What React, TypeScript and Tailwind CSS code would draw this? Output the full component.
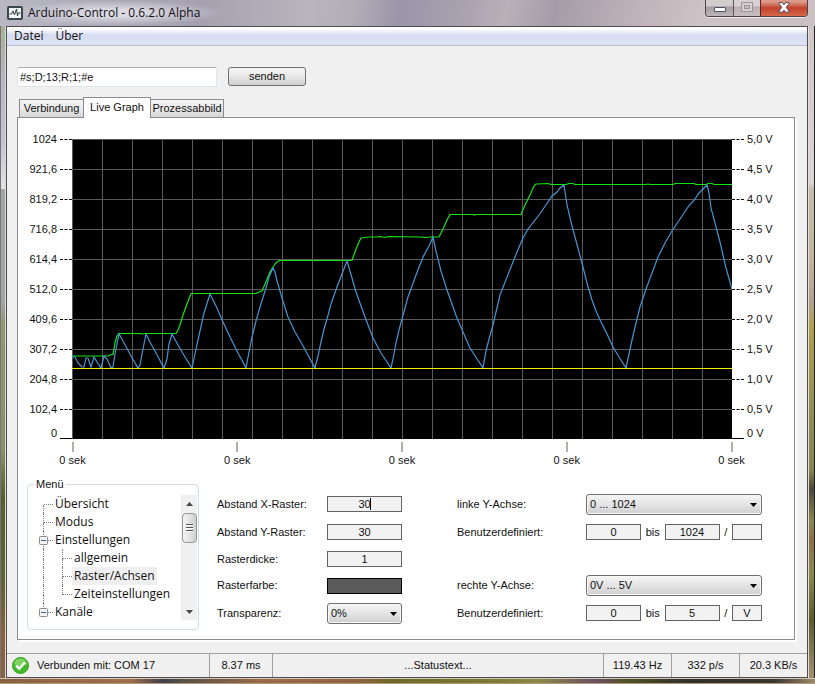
import { useState } from 'react';
import type { ReactNode } from 'react';

const leftAxis = ['1024', '921,6', '819,2', '716,8', '614,4', '512,0', '409,6', '307,2', '204,8', '102,4', '0'];
const rightAxis = ['5,0 V', '4,5 V', '4,0 V', '3,5 V', '3,0 V', '2,5 V', '2,0 V', '1,5 V', '1,0 V', '0,5 V', '0 V'];
const timeAxis = ['0 sek', '0 sek', '0 sek', '0 sek', '0 sek'];

const greenLine =
  '0,217 36,217 39,215.5 41,215.5 43,204 45,197 47,194.5 69,194.5 71,195 73,194.5 104,194.5 106,191 108,186 111,176 115,165 119,154.5 184,154.5 187,153 190,152 193,145 198,133 201,128 204,124 207,121.5 280,121.5 284,110 287,103 289,99 297,98 304,98 308,97.5 313,98.5 316,97.5 348,98 354,98.5 358,98 367,98 371,90 375,81 378,75.5 401,75.5 402,76 404,75.5 420,75.5 449,75.5 453,66 458,56 462,47 464,45 476,44.5 479,45.5 494,45.5 497,44.5 501,44.5 503,45.5 574,45.5 576,45 578,45.5 601,45.5 603,44.5 622,44.5 624,45.5 634,45.5 636,44.5 640,44.5 642,45.5 660,45.5';

const blueLine =
  '0,218 3,218 6,224 10,228 12,228 14,219 16,219 19,228 22,218 25,223 29,229 32,217 35,220 39,229 41,228 43,215 47,195 51,202 59,217 66,229 68,226 71,210 74,195 78,203 84,214 92,229 95,220 97,205 100,195 106,206 113,218 120,229 124,210 128,192 132,174 138,155 145,169 151,183 158,198 166,214 174,229 177,213 180,198 184,182 188,168 194,149 197,138 201,129 203,133 205,142 210,159 216,178 223,193 230,205 237,218 243,229 246,217 249,203 252,190 255,180 259,165 265,148 270,135 275,122 278,132 284,153 293,178 301,199 309,214 319,229 321,220 324,204 327,191 330,180 336,158 344,136 351,118 357,107 361,98 364,112 369,132 375,151 385,179 398,209 411,229 414,212 417,200 421,186 428,156 439,128 445,113 451,99 456,90 467,76 476,63 480,57 485,53 488,49 492,46 495,66 500,87 503,98 510,124 515,144 520,161 524,172 529,183 535,195 541,208 547,218 554,229 557,215 560,201 564,184 568,168 574,150 580,134 586,118 593,104 600,92 608,80 616,68 623,60 627,54 635,46 637,54 639,69 648,103 654,129 660,150';

const verticals = Array.from({ length: 22 }, (_, i) => i * 30 + 0.5);
const horizontals = Array.from({ length: 10 }, (_, i) => i * 30 + 0.5);

function AppIcon() {
  return (
    <svg width="16" height="14" viewBox="0 0 16 14" aria-hidden="true">
      <rect x="1" y="1" width="14" height="12" rx="1" fill="#f4f8f8" stroke="#37474b" strokeWidth="2" />
      <path d="M2.500 8h2l1.500-3 1.500 4 2-6 1 7 .5-3h2.500" fill="none" stroke="#2c3a3e" />
    </svg>
  );
}

function WindowButtons() {
  return (
    <div className="flex h-[17px] self-start overflow-hidden rounded-b border border-t-0 border-[#4d4447] shadow-[0_1px_0_#efe6e8]">
      <button
        aria-label="Minimieren"
        className="flex w-7 items-center justify-center border-r border-[#5c5457] bg-linear-to-b from-[#d3cccf] from-40% via-[#a59c9f] via-41% to-[#bdb4b7]"
      >
        <svg width="12" height="5" viewBox="0 0 12 5" className="mt-0.5">
          <rect x=".5" y=".5" width="11" height="4" rx=".5" fill="#fff" stroke="#4e5361" />
        </svg>
      </button>
      <button
        aria-label="Maximieren"
        disabled
        className="flex w-[26px] items-center justify-center bg-linear-to-b from-[#d8d0d3] from-40% via-[#bab0b3] via-41% to-[#c7bdc0]"
      >
        <svg width="12" height="10" viewBox="0 0 12 10" className="mb-0.5">
          <rect x=".5" y=".5" width="11" height="9" fill="#d5cfd1" stroke="#9b9496" />
          <rect x="3.500" y="3.500" width="5" height="3" fill="#c5bdc0" stroke="#9b9496" />
        </svg>
      </button>
      <button
        aria-label="Schließen"
        className="flex w-[47px] items-center justify-center border-l border-[#5a2622] bg-linear-to-b from-[#dd9a8c] from-10% via-[#c1402b] via-50% to-[#d4694a]"
      >
        <svg width="12" height="11" viewBox="0 0 12 11" className="mb-0.5">
          <path
            d="M1 .7h3.500L6 2.700 7.500.7H11v1L8.300 5.300 11 9v1.200H7.500L6 8.200l-1.500 2H1V9l2.700-3.700L1 1.700Z"
            fill="#fff"
            stroke="#4b4654"
          />
        </svg>
      </button>
    </div>
  );
}

function Graph() {
  return (
    <div>
      <div className="flex pt-1.5">
        <div className="w-[54px]">
          {leftAxis.map((label, i) =>
            i < 10 ? (
              <div key={label} className="flex h-[30px] items-center justify-end gap-[3px]">
                {label}
                <span className="w-3 border-t border-dashed border-black" />
              </div>
            ) : (
              <div key={label} className="flex h-[15px] items-end justify-end gap-[3px]">
                <span className="h-3 leading-3">{label}</span>
                <span className="h-px w-3 bg-black" />
              </div>
            ),
          )}
        </div>
        <svg
          viewBox="0 0 660 300"
          preserveAspectRatio="none"
          role="img"
          aria-label="Live Graph"
          className="mt-[15px] h-[300px] min-w-0 flex-1 bg-black"
        >
          <g stroke="#5a5a5a" shapeRendering="crispEdges">
            {verticals.map((x) => (
              <line key={x} x1={x} y1="0" x2={x} y2="300" />
            ))}
            {horizontals.map((y) => (
              <line key={y} x1="0" y1={y} x2="660" y2={y} />
            ))}
          </g>
          <polyline points={greenLine} fill="none" stroke="#12e612" strokeWidth="1.200" />
          <polyline points={blueLine} fill="none" stroke="#4595d3" strokeWidth="1.200" />
          <line x1="0" y1="229.500" x2="660" y2="229.500" stroke="#f2f200" />
        </svg>
        <div className="w-[62px]">
          {rightAxis.map((label, i) =>
            i < 10 ? (
              <div key={label} className="flex h-[30px] items-center gap-[3px]">
                <span className="w-3 border-t border-dashed border-black" />
                {label}
              </div>
            ) : (
              <div key={label} className="flex h-[15px] items-end gap-[3px]">
                <span className="h-px w-3 bg-black" />
                <span className="h-3 leading-3">{label}</span>
              </div>
            ),
          )}
        </div>
      </div>
      <div className="mr-[62px] ml-[54px] flex justify-between pt-[3px]">
        {timeAxis.map((label, i) => (
          <div key={i} className="flex w-px flex-col items-center">
            <span className="h-2.5 w-0.5 bg-[#b0b0a8]" />
            <span className="leading-4 whitespace-nowrap">{label}</span>
          </div>
        ))}
      </div>
    </div>
  );
}

// dotted connector in front of a tree item
function Branch({ up = true, down = true, across = true }: { up?: boolean; down?: boolean; across?: boolean }) {
  return (
    <span className="flex h-[18px] w-2.5 shrink-0 flex-col">
      <span
        className={`h-2.5 border-dotted border-[#808080] ${up ? 'border-l' : 'ml-px'} ${across ? 'border-b' : ''}`}
      />
      <span className={`h-2 border-dotted border-[#808080] ${down ? 'border-l' : ''}`} />
    </span>
  );
}

function TreeItem({
  label,
  nested,
  first,
  last,
  open,
  selected,
  onSelect,
}: {
  label: string;
  nested?: boolean;
  first?: boolean;
  last?: boolean;
  open?: boolean;
  selected: boolean;
  onSelect: (label: string) => void;
}) {
  return (
    <li className="relative flex h-[18px] items-center">
      {nested ? (
        <>
          <Branch across={false} />
          <span className="w-[9px]" />
          <Branch down={!last} />
        </>
      ) : (
        <Branch up={!first} down={!last} />
      )}
      {open && (
        <svg width="9" height="9" viewBox="0 0 9 9" className="absolute top-[5px] left-[-4px]" aria-hidden="true">
          <rect x=".5" y=".5" width="8" height="8" rx="1" fill="#f3f3f3" stroke="#8c8c8c" />
          <path d="M2 4.500h5" stroke="#3c5a9c" />
        </svg>
      )}
      <button
        onClick={() => onSelect(label)}
        className={`h-[18px] px-0.5 text-left leading-[18px] whitespace-nowrap ${selected ? 'bg-[#efefef]' : ''}`}
      >
        {label}
      </button>
    </li>
  );
}

function MenuTree() {
  const [selected, setSelected] = useState('Raster/Achsen');
  const props = (label: string) => ({ label, selected: selected === label, onSelect: setSelected });

  return (
    <fieldset className="h-[153px] w-[172px] shrink-0 rounded border border-[#d3dde6]">
      <legend className="ml-1.5 px-0.5 leading-[14px]">Menü</legend>
      <div className="flex h-[129px] justify-between pt-1 pr-px pl-[15px]">
        <ul className="font-['Open_Sans','Noto_Sans',sans-serif] text-xs">
          <TreeItem {...props('Übersicht')} first />
          <TreeItem {...props('Modus')} />
          <TreeItem {...props('Einstellungen')} open />
          <TreeItem {...props('allgemein')} nested />
          <TreeItem {...props('Raster/Achsen')} nested />
          <TreeItem {...props('Zeiteinstellungen')} nested last />
          <TreeItem {...props('Kanäle')} open last />
        </ul>
        <div className="flex w-4 flex-col items-center bg-[#f0f0f0]">
          <button aria-label="Nach oben" className="flex h-[18px] w-full items-center justify-center">
            <svg width="7" height="4" viewBox="0 0 7 4">
              <path d="M0 4 3.500 0 7 4Z" fill="#444" />
            </svg>
          </button>
          <div className="flex h-[30px] w-[15px] flex-col items-center justify-center gap-px rounded-sm border border-[#979797] bg-linear-to-r from-[#f5f5f5] to-[#cfcfcf]">
            <span className="h-0.5 w-[7px] border-t border-[#555] bg-white" />
            <span className="h-0.5 w-[7px] border-t border-[#555] bg-white" />
            <span className="h-0.5 w-[7px] border-t border-[#555] bg-white" />
          </div>
          <button aria-label="Nach unten" className="mt-auto flex h-4 w-full items-center justify-center">
            <svg width="7" height="4" viewBox="0 0 7 4">
              <path d="M0 0h7L3.500 4Z" fill="#444" />
            </svg>
          </button>
        </div>
      </div>
    </fieldset>
  );
}

function Box({ id, value, label, className }: { id?: string; value: string; label?: string; className: string }) {
  return (
    <input
      id={id}
      aria-label={label}
      defaultValue={value}
      className={`h-4 border border-[#646464] bg-[#f2f2f2] text-center outline-none ${className}`}
    />
  );
}

function Dropdown({ id, options }: { id: string; options: string[] }) {
  return (
    <span className="relative block w-full">
      <select
        id={id}
        className="block h-[21px] w-full appearance-none rounded-[3px] border border-[#707070] bg-linear-to-b from-[#f2f2f2] from-10% via-[#e4e4e4] via-50% to-[#cfcfcf] pl-[3px] shadow-[inset_0_0_0_1px_#f8f8f8]"
      >
        {options.map((o) => (
          <option key={o}>{o}</option>
        ))}
      </select>
      <svg width="7" height="4" viewBox="0 0 7 4" className="pointer-events-none absolute top-[9px] right-[5px]">
        <path d="M0 0h7L3.500 4Z" fill="#000" />
      </svg>
    </span>
  );
}

function Range({ id, from, to, unit, side }: { id: string; from: string; to: string; unit: string; side: string }) {
  return (
    <div className="flex w-44 items-center justify-between">
      <Box id={id} value={from} className="w-[55px]" />
      <span>bis</span>
      <Box label={`${side} Maximum`} value={to} className="w-[55px]" />
      <span>/</span>
      <Box label={`${side} Einheit`} value={unit} className="w-[30px]" />
    </div>
  );
}

function Settings() {
  return (
    <>
      <div className="mt-[13px] ml-[18px] grid grid-cols-[110px_75px] grid-rows-[28px_28px_26px_27px_28px] items-center">
        <label htmlFor="x-raster">Abstand X-Raster:</label>
        <span className="relative flex">
          <Box id="x-raster" value="30" className="w-full" />
          <span className="absolute top-0.5 left-[43px] h-3 w-px bg-black" />
        </span>
        <label htmlFor="y-raster">Abstand Y-Raster:</label>
        <Box id="y-raster" value="30" className="w-full" />
        <label htmlFor="dicke">Rasterdicke:</label>
        <Box id="dicke" value="1" className="w-full" />
        <span>Rasterfarbe:</span>
        <button aria-label="Rasterfarbe" className="h-4 border border-black bg-[#5a5a5a]" />
        <label htmlFor="transparenz">Transparenz:</label>
        <Dropdown id="transparenz" options={['0%', '25%', '50%', '75%']} />
      </div>
      <div className="mt-[13px] ml-[55px] grid grid-cols-[129px_176px] grid-rows-[28px_28px_26px_27px_28px] items-center">
        <label htmlFor="achse-links">linke Y-Achse:</label>
        <Dropdown id="achse-links" options={['0 ... 1024', 'Benutzerdefiniert']} />
        <label htmlFor="links-min">Benutzerdefiniert:</label>
        <Range id="links-min" side="Linke Y-Achse" from="0" to="1024" unit="" />
        <div className="col-span-2" />
        <label htmlFor="achse-rechts">rechte Y-Achse:</label>
        <Dropdown id="achse-rechts" options={['0V ... 5V', 'Benutzerdefiniert']} />
        <label htmlFor="rechts-min">Benutzerdefiniert:</label>
        <Range id="rechts-min" side="Rechte Y-Achse" from="0" to="5" unit="V" />
      </div>
    </>
  );
}

function Tab({ active, className, children }: { active?: boolean; className: string; children: ReactNode }) {
  return (
    <button
      role="tab"
      aria-selected={!!active}
      className={`border border-b-0 border-[#8b8b96] ${className} ${
        active
          ? 'relative z-10 -mx-px -mb-px h-[21px] bg-white pb-0.5'
          : 'h-[18px] bg-linear-to-b from-[#f3f3f3] via-[#ebebeb] to-[#d5d5d5]'
      }`}
    >
      {children}
    </button>
  );
}

function StatusCell({ className, children }: { className: string; children: ReactNode }) {
  return (
    <div className={`flex items-center border-r border-[#a0a0a0] last:border-r-0 ${className}`}>{children}</div>
  );
}

export default function App() {
  return (
    <div className="flex min-h-screen flex-col overflow-hidden bg-[#c8bec3] font-['Liberation_Sans',Arial,sans-serif] text-[11px] text-[#111]">
      <header className="flex h-[26px] justify-between bg-[linear-gradient(100deg,#b9b8c4_0%,#a9a7b7_14%,#a5a1b0_25%,#b9b5bd_38%,#b3afb8_43%,#9a96a9_49%,#a7a0ae_56%,#b9b0b8_62%,#a49ca8_68%,#bfb3b9_78%,#cdc2c5_86%,#cabfc2_100%)] px-[7px]">
        <div className="flex items-center gap-[5px] bg-[radial-gradient(ellipse,#dad8e1_20%,transparent_70%)] pr-6 font-['Open_Sans','Noto_Sans',sans-serif] text-xs">
          <AppIcon />
          <h1>Arduino-Control - 0.6.2.0 Alpha</h1>
        </div>
        <WindowButtons />
      </header>

      <div className="flex flex-1">
        <div className="w-1.5 border-x border-l-[#77757a] border-r-[#d9d9d9] bg-[linear-gradient(#a9b093_0%,#b9b7cb_10%,#c4c3d4_18%,#e2e4e4_25%,#a2a8a5_25%,#a2a8a5_42%,#8f9670_46%,#8b9269_65%,#56602f_72%,#5d6333_84%,#8a6040_94%,#8a5f3c_100%)]" />
        <div className="flex min-w-0 flex-1 flex-col border border-[#4f4b50] bg-[#f0f0f0]">
          <nav className="flex h-[19px] items-center gap-3 border-b border-[#b6bcd2] bg-linear-to-b from-white from-10% via-[#d5dcef] via-45% to-[#dfe4f5] pl-[7px] font-['Open_Sans','Noto_Sans',sans-serif] text-xs">
            <button>Datei</button>
            <button>Über</button>
          </nav>

          <main className="flex flex-1 flex-col pt-[21px] pr-3 pb-[13px] pl-2.5">
            <div className="flex gap-[11px]">
              <input
                aria-label="Befehl"
                defaultValue="#s;D;13;R;1;#e"
                className="h-5 w-[200px] rounded-xs border border-[#dfe5ec] border-t-[#abadb3] bg-white px-0.5"
              />
              <button className="h-[19px] w-[78px] rounded-[3px] border border-[#707070] bg-linear-to-b from-[#f2f2f2] from-10% via-[#e8e8e8] via-50% to-[#cfcfcf]">
                senden
              </button>
            </div>

            <div role="tablist" className="mt-2.5 ml-0.5 flex h-5 items-end">
              <Tab className="w-[65px]">Verbindung</Tab>
              <Tab className="w-[68px]" active>
                Live Graph
              </Tab>
              <Tab className="w-[74px]">Prozessabbild</Tab>
            </div>

            <section className="flex-1 border border-[#8b8b96] bg-white shadow-[2px_2px_0_#fff]">
              <Graph />
              <div className="flex pt-[9px] pb-2 pl-[9px]">
                <MenuTree />
                <Settings />
              </div>
            </section>
          </main>

          <footer className="flex h-6 border-t border-[#a0a0a0]">
            <StatusCell className="w-[203px] gap-2 pl-[5px]">
              <svg width="17" height="17" viewBox="0 0 17 17" aria-hidden="true">
                <circle cx="8.500" cy="8.500" r="8" fill="#46b82c" stroke="#35a01f" />
                <path d="M2 7a6.600 6.600 0 0 1 13 0C11 9.500 6 9.500 2 7Z" fill="#7fd35f" />
                <path d="m4.200 8.600 3 3.200 5.600-6.300" fill="none" stroke="#fff" strokeWidth="2.400" />
              </svg>
              Verbunden mit: COM 17
            </StatusCell>
            <StatusCell className="w-[63px] justify-center">8.37 ms</StatusCell>
            <StatusCell className="flex-1 justify-center">...Statustext...</StatusCell>
            <StatusCell className="w-[68px] justify-center">119.43 Hz</StatusCell>
            <StatusCell className="w-[68px] justify-center">332 p/s</StatusCell>
            <StatusCell className="w-[67px] justify-center">20.3 KB/s</StatusCell>
          </footer>
        </div>
        <div className="w-[7px] border-x border-l-[#e4dcd8] border-r-[#222] bg-[linear-gradient(#cfc5c8_0%,#dcd5d6_24%,#c9bbac_25%,#c4b49c_36%,#b3a292_42%,#b0a04f_46%,#8e8a55_62%,#8a8550_68%,#4c483a_71%,#8c8452_76%,#8a6f4a_79%,#8d8850_84%,#5c5b2e_91%,#a58f72_100%)]" />
      </div>

      <div className="h-1.5 border-y border-t-[#d0c8b8] border-b-[#b39a7c] bg-[linear-gradient(90deg,#8a6040_0%,#a06f4c_16%,#3f3f4c_20%,#5c5346_23%,#9c6a48_32%,#8f6240_44%,#6f6a28_48%,#7b7a34_60%,#8a8a46_66%,#6d4f63_73%,#4f5222_77%,#33312c_84%,#3a352f_95%,#a08a6e_100%)]" />
    </div>
  );
}
